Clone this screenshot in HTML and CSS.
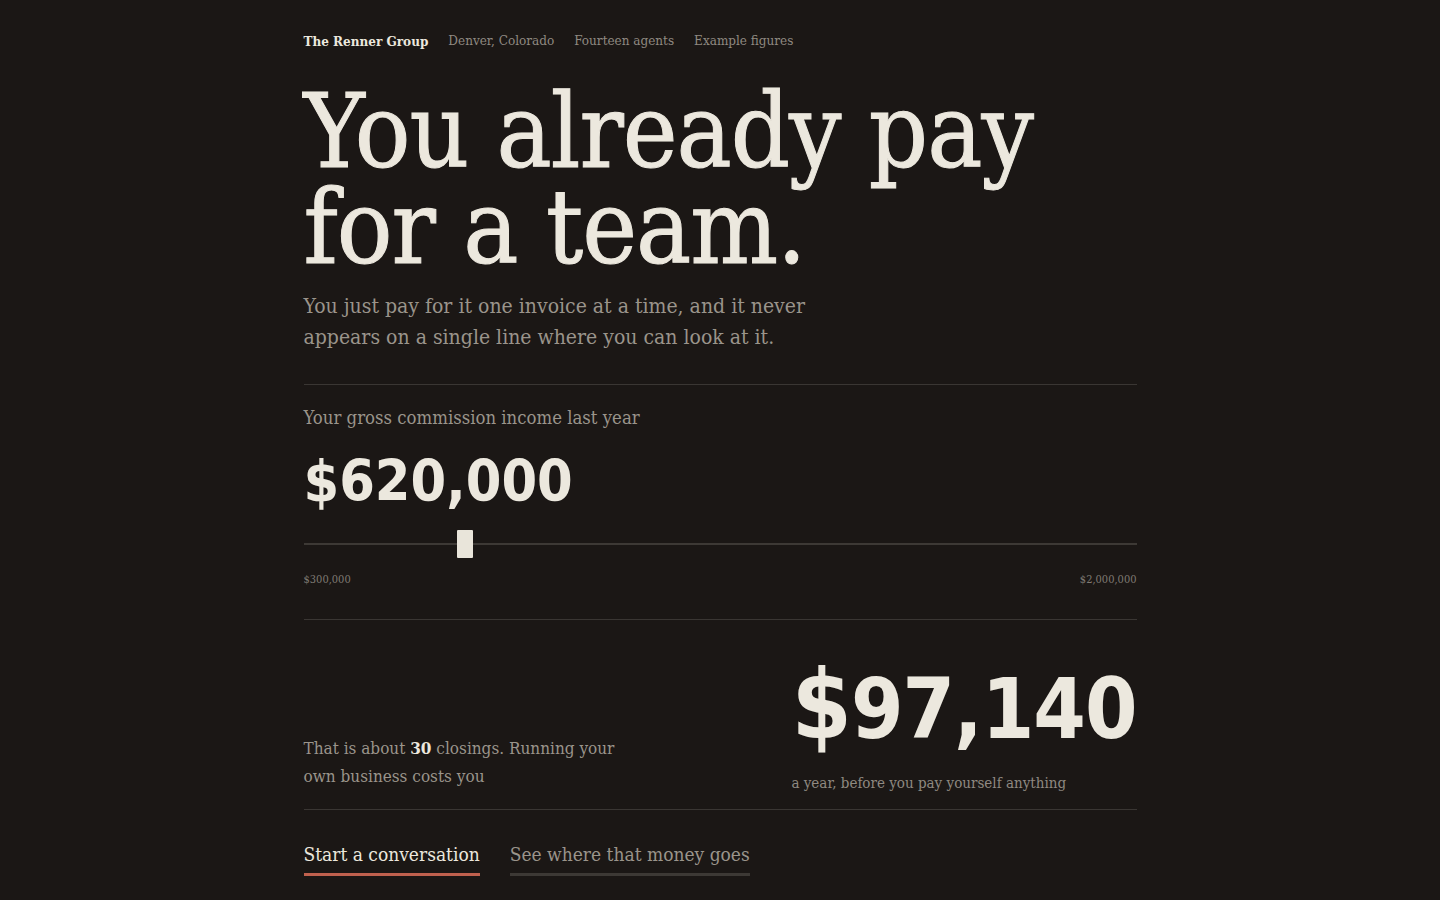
FILE: index.html
```html
<!DOCTYPE html>
<html lang="en">
<head>
<meta charset="utf-8">
<title>The Renner Group</title>
<link rel="stylesheet" href="styles.css">
</head>
<body>
<main class="page">
  <nav class="meta">
    <strong class="brand">The Renner Group</strong>
    <span>Denver, Colorado</span>
    <span>Fourteen agents</span>
    <span>Example figures</span>
  </nav>
  <h1 class="headline">You already pay<br>for a team.</h1>
  <p class="lede">You just pay for it one invoice at a time, and it never<br>appears on a single line where you can look at it.</p>

  <section class="income">
    <label class="label" for="gci">Your gross commission income last year</label>
    <div class="gci">$620,000</div>
    <input class="slider" id="gci" type="range" min="300000" max="2000000" step="10000" value="620000">
    <div class="ends"><span>$300,000</span><span>$2,000,000</span></div>
  </section>

  <section class="result">
    <p class="note">That is about <b>30</b> closings. Running your<br>own business costs you</p>
    <div class="cost">
      <div class="amount"><span class="dollar">$</span>97,140</div>
      <div class="per">a year, before you pay yourself anything</div>
    </div>
  </section>

  <div class="actions">
    <a class="action primary" href="#">Start a conversation</a>
    <a class="action secondary" href="#">See where that money goes</a>
  </div>
</main>
</body>
</html>
```

FILE: styles.css
```css
html, body {
  margin: 0;
  padding: 0;
  background: #1b1715;
}
body {
  color: #ece8de;
  font-family: "DejaVu Serif Condensed", "DejaVu Serif", serif;
  font-stretch: condensed;
}
.page {
  width: 833px;
  margin: 0 auto;
  padding-top: 30px;
}
.meta {
  display: flex;
  gap: 20px;
  font-size: 13.4px;
  line-height: 22px;
  color: #8f8981;
}
.brand {
  color: #ece8de;
  font-weight: 700;
}
.headline {
  margin: 31px 0 0;
  font-size: 103px;
  line-height: 96px;
  font-weight: 400;
  letter-spacing: -1px;
  color: #ece8de;
  -webkit-text-stroke: 1px #ece8de;
}
.lede {
  margin: 16px 0 0;
  font-size: 21px;
  line-height: 31px;
  color: #9a948b;
}
.income {
  margin-top: 31px;
  border-top: 1px solid #3a3633;
  padding-top: 20px;
  border-bottom: 1px solid #3a3633;
  padding-bottom: 32px;
}
.label {
  display: block;
  font-size: 18.4px;
  line-height: 26px;
  color: #9a948b;
}
.gci {
  margin-top: 12px;
  font-family: "DejaVu Sans Condensed", "DejaVu Sans", sans-serif;
  font-stretch: condensed;
  font-weight: 700;
  font-size: 57px;
  line-height: 76px;
  color: #ece8de;
}
.slider {
  -webkit-appearance: none;
  appearance: none;
  display: block;
  width: 100%;
  margin: 11px 0 0;
  height: 28px;
  background: transparent;
}
.slider::-webkit-slider-runnable-track {
  height: 2px;
  background: #3d3935;
}
.slider::-webkit-slider-thumb {
  -webkit-appearance: none;
  width: 16px;
  height: 28px;
  margin-top: -13px;
  background: #e9e5da;
  border: none;
  border-radius: 1px;
}
.ends {
  display: flex;
  justify-content: space-between;
  margin-top: 15px;
  font-size: 11px;
  line-height: 14px;
  color: #7f7a73;
}
.result {
  display: grid;
  grid-template-columns: 1fr auto;
  align-items: end;
  padding-top: 30px;
  padding-bottom: 15px;
  border-bottom: 1px solid #3a3633;
}
.note {
  margin: 0 0 4px;
  font-size: 17px;
  line-height: 28px;
  color: #9a948b;
}
.note b {
  color: #ece8de;
  font-weight: 700;
}
.amount {
  font-family: "DejaVu Sans Condensed", "DejaVu Sans", sans-serif;
  font-stretch: condensed;
  font-weight: 700;
  font-size: 84px;
  line-height: 110px;
  letter-spacing: -1px;
  color: #ece8de;
}
.dollar {
  font-size: 1.15em;
}
.per {
  margin-top: 8px;
  font-size: 15px;
  line-height: 22px;
  color: #8f8981;
}
.actions {
  display: flex;
  gap: 30px;
  margin-top: 30px;
}
.action {
  font-size: 19px;
  line-height: 28px;
  text-decoration: none;
  padding-bottom: 5px;
  border-bottom: 3px solid #3d3935;
  color: #9a948b;
}
.action.primary {
  color: #ece8de;
  border-bottom-color: #c0614e;
}
```
